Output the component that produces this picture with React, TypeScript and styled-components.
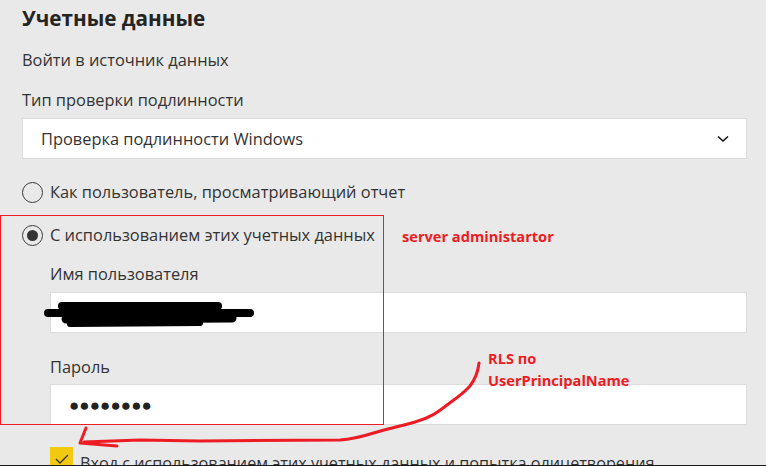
import React from "react";
import styled, { createGlobalStyle } from "styled-components";

const Global = createGlobalStyle`
  html, body { margin: 0; padding: 0; }
  body { background: #e9e9e9; font-family: "Open Sans", "Noto Sans", sans-serif; color: #333; }
`;

const Page = styled.div`
  position: relative;
  width: 766px;
  height: 466px;
  box-sizing: border-box;
  overflow: hidden;
  background: #e9e9e9;
  border-bottom: 1px solid #1a1a1a;
  padding: 3px 19px 0 22px;
`;

const Title = styled.h1`
  margin: 0;
  font-size: 20.7px;
  line-height: 30px;
  font-weight: 700;
  color: #252423;
`;

const Text = styled.div<{ $top: number; $indent?: number }>`
  margin-top: ${(p) => p.$top}px;
  margin-left: ${(p) => p.$indent ?? 0}px;
  font-size: 16.4px;
  line-height: 22px;
  color: #333;
`;

const Box = styled.div<{ $top: number; $indent?: number }>`
  margin-top: ${(p) => p.$top}px;
  margin-left: ${(p) => p.$indent ?? 0}px;
  height: 41px;
  box-sizing: border-box;
  background: #fff;
  border: 1px solid #dcdcdc;
  display: flex;
  align-items: center;
  justify-content: space-between;
  padding: 0 17px 0 18px;
  font-size: 16.4px;
  color: #333;
`;

const RadioRow = styled.div<{ $top: number }>`
  margin-top: ${(p) => p.$top}px;
  display: flex;
  align-items: center;
  gap: 7px;
  font-size: 16.4px;
  line-height: 22px;
`;

const Radio = styled.span<{ $checked?: boolean }>`
  width: 21px;
  height: 21px;
  box-sizing: border-box;
  border: 1.5px solid #3a3a3a;
  border-radius: 50%;
  display: flex;
  align-items: center;
  justify-content: center;
  &::after {
    content: "";
    width: 11px;
    height: 11px;
    border-radius: 50%;
    background: ${(p) => (p.$checked ? "#333" : "transparent")};
  }
`;

const Dots = styled.span`
  font-size: 17px;
  letter-spacing: 0.1px;
  color: #222;
`;

const CheckRow = styled.div`
  margin-top: 22px;
  margin-left: 28px;
  display: flex;
  align-items: flex-start;
  gap: 7px;
  font-size: 16.2px;
  line-height: 22px;
`;

const CheckBox = styled.span`
  width: 23px;
  height: 23px;
  flex: none;
  background: #f2c811;
  display: flex;
  align-items: center;
  justify-content: center;
`;

const CheckText = styled.span`
  margin-top: 5px;
  white-space: nowrap;
`;

const Overlay = styled.svg`
  position: absolute;
  left: 0;
  top: 0;
  pointer-events: none;
`;

const RedFrame = styled.div`
  position: absolute;
  left: 0;
  top: 215px;
  width: 384px;
  height: 210px;
  box-sizing: border-box;
  border: 1px solid #ed1c24;
  pointer-events: none;
`;

const Note = styled.div<{ $x: number; $y: number }>`
  position: absolute;
  left: ${(p) => p.$x}px;
  top: ${(p) => p.$y}px;
  color: #ed1c24;
  font-family: "Open Sans", "Noto Sans", sans-serif;
  font-weight: 700;
  font-size: 14.6px;
  line-height: 22px;
  white-space: nowrap;
`;

export default function App() {
  return (
    <>
      <Global />
      <Page>
        <Title>Учетные данные</Title>
        <Text $top={16}>Войти в источник данных</Text>
        <Text $top={18}>Тип проверки подлинности</Text>
        <Box $top={7}>
          <span>Проверка подлинности Windows</span>
          <svg width="12" height="8" viewBox="0 0 12 8">
            <path d="M1 1.5 L6 6 L11 1.5" fill="none" stroke="#111" strokeWidth="1.6" />
          </svg>
        </Box>
        <RadioRow $top={22}>
          <Radio />
          <span>Как пользователь, просматривающий отчет</span>
        </RadioRow>
        <RadioRow $top={21}>
          <Radio $checked />
          <span>С использованием этих учетных данных</span>
        </RadioRow>
        <Text $top={17} $indent={28}>Имя пользователя</Text>
        <Box $top={7} $indent={28}>
          <span />
        </Box>
        <Text $top={23} $indent={28}>Пароль</Text>
        <Box $top={6} $indent={28}>
          <Dots>●●●●●●●●</Dots>
        </Box>
        <CheckRow>
          <CheckBox>
            <svg width="14" height="10" viewBox="0 0 14 10">
              <path d="M1 5 L5 9 L13 1" fill="none" stroke="#333" strokeWidth="1.3" />
            </svg>
          </CheckBox>
          <CheckText>Вход с использованием этих учетных данных и попытка олицетворения</CheckText>
        </CheckRow>

        <RedFrame />
        <Note $x={402} $y={225}>server administartor</Note>
        <Note $x={488} $y={347}>
          RLS по
          <br />
          UserPrincipalName
        </Note>
        <Overlay width="766" height="466" viewBox="0 0 766 466">
          <g stroke="#000" strokeLinecap="round" fill="none">
            <path d="M62 306 L218 306" strokeWidth="8" />
            <path d="M48 313 L250 313" strokeWidth="8" />
            <path d="M66 319 L232 318" strokeWidth="9" />
            <path d="M70 324 L200 323" strokeWidth="6" />
          </g>
          <g stroke="#ed1c24" strokeWidth="3" strokeLinecap="round" strokeLinejoin="round" fill="none">
            <path d="M479 363 C478 372 476 378 470 386 C463 394 455 399 447 405 C438 412 430 418 415 422 C402 426 390 428 377 432 C364 436 356 439 340 440 L200 441 L140 440 L84 442" />
            <path d="M86 428 L80 443 L117 446" />
          </g>
        </Overlay>
      </Page>
    </>
  );
}
